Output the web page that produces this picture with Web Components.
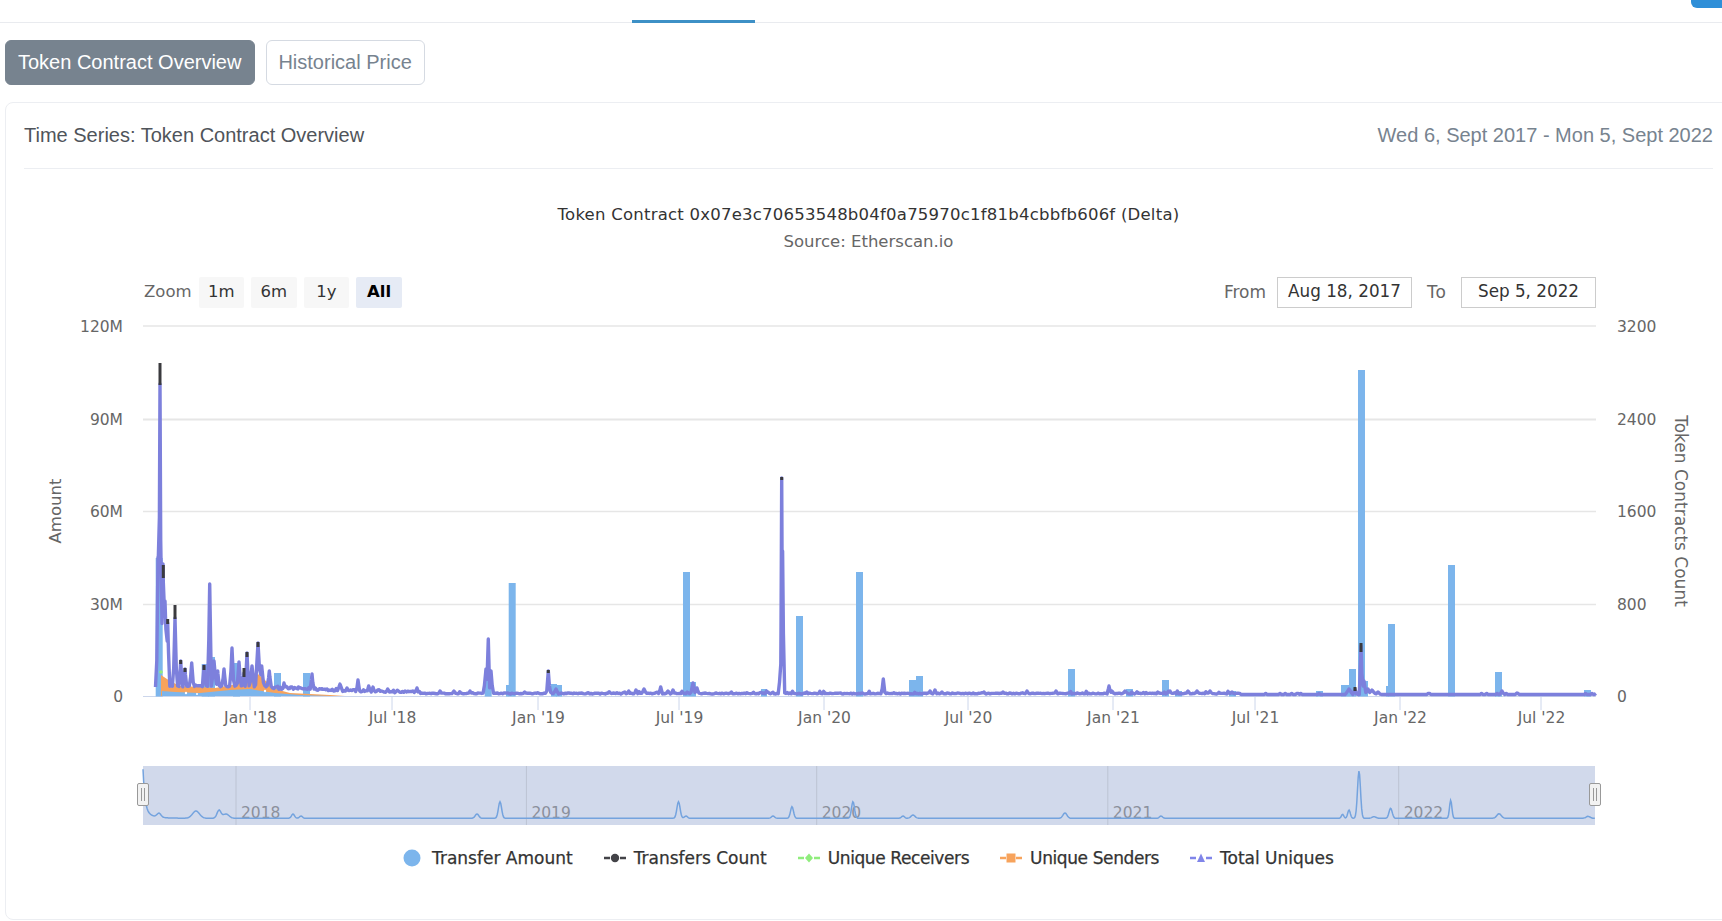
<!DOCTYPE html>
<html>
<head>
<meta charset="utf-8">
<title>Token Contract Overview</title>
<style>
html, body { margin: 0; padding: 0; background: #fff; overflow: hidden; }
body { width: 1722px; height: 921px; font-family: "Liberation Sans", Arial, sans-serif; }
</style>
</head>
<body>
<nav-bar></nav-bar>
<tab-row>
  <tab-pill active>Token Contract Overview</tab-pill>
  <tab-pill>Historical Price</tab-pill>
</tab-row>
<chart-card>
  <span slot="title">Time Series: Token Contract Overview</span>
  <span slot="range">Wed 6, Sept 2017 - Mon 5, Sept 2022</span>
  <stock-chart></stock-chart>
</chart-card>

<script>
const CHART_FONT = '"DejaVu Sans", Verdana, sans-serif';

class NavBar extends HTMLElement {
    constructor() {
        super();
        this.shadow = this.attachShadow({mode:'open'});
        this.shadow.innerHTML = `<style>
            :host { display: flex; height: 22px; border-bottom: 1px solid #e9ebef; justify-content: space-between; }
            .tab { width: 123px; margin-left: 632px; height: 20px; border-bottom: 3px solid #3d90c6; }
            .btn { width: 31px; height: 8px; background: #2f8fd8; border-bottom-left-radius: 6px; }
        </style><div class="tab"></div><div class="btn"></div>`;
    }
}

class TabRow extends HTMLElement {
    constructor() {
        super();
        this.shadow = this.attachShadow({mode:'open'});
        this.shadow.innerHTML = `<style>
            :host { display: flex; gap: 11px; padding: 17px 0 17px 5px; }
        </style><slot></slot>`;
    }
}

class TabPill extends HTMLElement {
    constructor() {
        super();
        this.shadow = this.attachShadow({mode:'open'});
        this.shadow.innerHTML = `<style>
            :host { display: flex; align-items: center; box-sizing: border-box; height: 45px; padding: 0 12px 0 11px;
                border: 1px solid #d5dae2; border-radius: 6px; color: #77838f; background: #fff;
                font: 20px "Liberation Sans", Arial, sans-serif; white-space: nowrap; }
            :host([active]) { background: #77838f; border-color: #77838f; color: #fff; padding: 0 13px 0 12px; }
        </style><slot></slot>`;
    }
}

class ChartCard extends HTMLElement {
    constructor() {
        super();
        this.shadow = this.attachShadow({mode:'open'});
        this.shadow.innerHTML = `<style>
            :host { display: block; box-sizing: border-box; width: 1727px; height: 818px; margin-left: 5px; padding: 0 18px;
                border: 1px solid #eceef2; border-radius: 8px; font: 20px "Liberation Sans", Arial, sans-serif; }
            header { display: flex; justify-content: space-between; align-items: center; height: 65px; border-bottom: 1px solid #eceef2; }
            .t { color: #4f545a; }
            .r { color: #77838f; }
        </style>
        <header><div class="t"><slot name="title"></slot></div><div class="r"><slot name="range"></slot></div></header>
        <slot></slot>`;
    }
}

class RangeSelector extends HTMLElement {
    constructor() {
        super();
        this.shadow = this.attachShadow({mode:'open'});
        this.shadow.innerHTML = `<style>
            :host { display: flex; justify-content: space-between; align-items: center; height: 31px; padding: 0 117px 0 120px;
                font: 16.5px ${CHART_FONT}; color: #666; }
            .side { display: flex; align-items: center; }
            .side > span { margin-bottom: 2px; }
            .zoom { width: 54.5px; }
            button { all: unset; box-sizing: border-box; width: 45.6px; height: 31px; padding-bottom: 3px; margin-right: 7px; text-align: center; background: #f7f7f7;
                border-radius: 2px; color: #333; font-family: ${CHART_FONT}; font-size: 16.5px; }
            button.on { background: #e6ebf5; color: #000; font-weight: bold; }
            .date { box-sizing: border-box; width: 135px; height: 31px; line-height: 26px; text-align: center; border: 1px solid #ccc; color: #333; font-size: 16.8px; }
            .from { margin-right: 11px; font-size: 17px; }
            .to { width: 22px; margin-left: 15px; margin-right: 12px; font-size: 17px; letter-spacing: 1px; }
        </style>
        <div class="side">
            <span class="zoom">Zoom</span>
            <button>1m</button><button>6m</button><button>1y</button><button class="on">All</button>
        </div>
        <div class="side">
            <span class="from">From</span><div class="date">Aug 18, 2017</div>
            <span class="to">To</span><div class="date">Sep 5, 2022</div>
        </div>`;
    }
}

class PricePlot extends HTMLElement {
    constructor() {
        super();
        this.shadow = this.attachShadow({mode:'open'});
        this.shadow.innerHTML = `<style>
            :host { display: block; height: 430px; }
            svg { display: block; }
            text { font: 15.5px ${CHART_FONT}; fill: #666; }
        </style>` + this.render();
    }

    render() {
        // everything in here is in page coordinates, the viewBox takes care of the offset
        const left = 143, right = 1596, base = 695.5;
        let rng = 12345;
        const rand = () => {
            rng = (rng * 1664525 + 1013904223) % 4294967296;
            return rng / 4294967296;
        };

        let out = `<svg width="1689" height="430" viewBox="24 315 1689 430" xmlns="http://www.w3.org/2000/svg">`;

        [325, 418.5, 510.5, 603.5].forEach(y => {
            out += `<line x1="${left}" x2="${right}" y1="${y}" y2="${y}" stroke="#e6e6e6" stroke-width="${y == 418.5 ? 2 : 1.5}"/>`;
        });

        // axis labels
        [["120M", 325], ["90M", 418.5], ["60M", 510.5], ["30M", 603.5], ["0", 695]].forEach(l => {
            out += `<text x="123" y="${l[1] + 5.5}" text-anchor="end">${l[0]}</text>`;
        });
        [["3200", 325], ["2400", 418.5], ["1600", 510.5], ["800", 603.5], ["0", 695]].forEach(l => {
            out += `<text x="1617" y="${l[1] + 5.5}">${l[0]}</text>`;
        });
        out += `<text transform="translate(61 510) rotate(-90)" text-anchor="middle" style="font-size:16.5px">Amount</text>`;
        out += `<text transform="translate(1675 510) rotate(90)" text-anchor="middle" style="font-size:17px">Token Contracts Count</text>`;

        // time axis
        out += `<line x1="${left}" x2="${right}" y1="${base}" y2="${base}" stroke="#ccd6eb"/>`;
        [["Jan '18", 250], ["Jul '18", 392], ["Jan '19", 538], ["Jul '19", 679], ["Jan '20", 824],
         ["Jul '20", 968], ["Jan '21", 1113], ["Jul '21", 1255], ["Jan '22", 1400], ["Jul '22", 1541]].forEach(t => {
            out += `<line x1="${t[1]}" x2="${t[1]}" y1="${base}" y2="709" stroke="#ccd6eb"/>`;
            out += `<text x="${t[1] + 0.5}" y="722" text-anchor="middle">${t[0]}</text>`;
        });

        // transfer amount columns: [x, top, width]
        const bars = [[155.7,557,7],[201.7,663,7],[208,656,7],[233,662,7],[274,672,7],[303,672,7],[484.7,669,7],[508.7,582,7],[506,684,3],
            [551,683,6],[556,684,6],[683,571,7],[690,681,6],[761,688,6],[796,615,7],[856,571,7],[909,679,7],[916,675,7],
            [1068,668,7],[1126,688,7],[1162,679,7],[1175,690,7],[1229,690,7],[1316,690,7],[1341,684,8],[1349,668,7],[1358,369,7],[1365,680,3],
            [1386,685,3],[1388,623,7],[1448,564,7],[1495,671,7],[1584,689,7]];
        bars.forEach(b => {
            out += `<rect x="${b[0]}" y="${b[1]}" width="${b[2]}" height="${base - b[1]}" fill="#7cb5ec"/>`;
        });

        // low stacked areas in the first months
        out += `<path d="M161 695L161 674 170 680 180 685 200 686 215 687 232 684 245 680 258 673 266 680 275 688 290 692 330 694 345 695Z" fill="#f7a35c"/>`;
        out += `<path d="M162 695L162 690 175 691 200 692 230 689 250 688 262 690 275 692 300 694 330 695Z" fill="#7cb5ec"/>`;
        out += `<circle cx="246" cy="681" r="1.6" fill="#90ed7d"/><circle cx="161" cy="671" r="1.8" fill="#90ed7d"/>`;
        out += `<circle cx="186" cy="692" r="1.2" fill="#fff"/><circle cx="197" cy="693" r="1" fill="#fff"/><circle cx="265" cy="690" r="1.2" fill="#fff"/>`;

        // spikes of the line series: [x, top, half width]
        const spikes = [[158,556,1.6],[160,383,1.4],[163,563,2.2],[165,600,3],[167.7,622,2],[175,617,2],[180.7,660,2],[185,668,2],[191.7,662,2.5],
            [204,665,2],[209.7,583,1.8],[214,660,3],[217.7,670,2],[224,668,2.5],[232,647,2.2],[239,661,2.5],[244,672,2],[247,652,2],[252,665,3],[258,642,3],
            [261.7,665,3],[269.3,670,2.5],[284,682,2.5],[298,688,3],[312,673,2],[322,689,4],[340,683,4],[347,687,3],[358,679,2],[368.7,685,2.5],[373,686,2.5],[387.7,688,3],[417,687,2],[440,690,2],
            [488.3,638,1.4],[486,668,2.5],[491,670,2],[454,690,3],[470,690,2],[548.3,670,1.8],[556,688,3],[636,689,2],[644,688,3],[660.7,686,2],[668,690,3],[673,689,2],
            [693,682,2.5],[697,687,2],[781.7,477,1],[782.6,550,1.4],[781,660,2.4],[883.3,678,1.8],
            [768,691,3],[930,690,2],[935,689,2],[942,691,2],[984,691,2],[1003,691,3],[1027,690,2],[1056,690,2],[1109,685,2],[1112,690,3],[1125,690,3],
            [1170,690,2],[1188,690,3],[1197,690,3],[1210,690,3],[1232,691,3],[1349,688,4],[1355,688,2],[1361,645,1.6],[1364,680,2.2],[1368,688,3],[1372,689,4],[1378,691,3],[1502,690,2.5],[1517,692,2]];

        // sample every 1.3px and on each spike top, otherwise narrow peaks get lost
        const xs = spikes.map(s => s[0]);
        for (let x = 155.5; x <= right; x += 1.3) xs.push(x);
        xs.sort((a, b) => a - b);

        const pts = xs.map(x => {
            let y;
            if (x < 270) y = 686 - 2 * rand();
            else if (x < 420) y = 688 + (x - 270) / 150 * 5 - 3 * rand();
            else if (x < 1240) y = 693 - (rand() > 0.85 ? rand() * 3 : rand());
            else y = 693.8 - (rand() > 0.93 ? 1.4 : 0.3);
            spikes.forEach(s => {
                const d = Math.abs(x - s[0]);
                if (d < s[2]) y = Math.min(y, s[1] + (694 - s[1]) * d / s[2]);
            });
            return x.toFixed(1) + " " + y.toFixed(1);
        });
        out += `<path d="M${pts.join("L")}" fill="none" stroke="#7d80dc" stroke-width="3.4" stroke-linejoin="round"/>`;

        // transfers count peeks out above the uniques line at the tall spikes
        [[160,362,384],[163.3,564,577],[167.7,618,623],[175,604,618],[180.7,659,663],[185,667,671],[204,664,669],[244,667,676],[247,651,656],
         [258,641,646],[548.3,669,672],[781.7,476,479],[1361,642,651],[1355,686,690]].forEach(t => {
            out += `<line x1="${t[0]}" x2="${t[0]}" y1="${t[1]}" y2="${t[2]}" stroke="#3a3a3e" stroke-width="3"/>`;
        });

        return out + `</svg>`;
    }
}

class RangeNavigator extends HTMLElement {
    constructor() {
        super();
        this.shadow = this.attachShadow({mode:'open'});
        this.shadow.innerHTML = `<style>
            :host { display: block; height: 60px; margin-top: 20px; }
            svg { display: block; }
            text { font: 15.5px ${CHART_FONT}; fill: #8b909c; }
        </style>` + this.render();
    }

    handle(x) {
        return `<rect x="${x}" y="782.5" width="11" height="22" rx="1.5" fill="#f2f2f2" stroke="#999"/>
            <path d="M${x + 4} 787V800M${x + 7} 787V800" stroke="#999"/>`;
    }

    render() {
        const left = 143, right = 1595;
        // [x, top, sigma]
        const peaks = [[159,813.3,2],[196,810,3.5],[219,809.3,2],[226,813,3],[293,813,1.5],[301,815,1.5],[477,813,1.8],[500,800.7,1.6],[678.5,800.7,1.6],[686,815,1.5],
            [773,815,1.5],[792,805.7,1.5],[853,800.7,1.5],[903,815,1.5],[913,814,2],[1065,812,2],[1161,815,1.5],[1342.6,813.3,1.2],[1349,809,1.3],[1359,770,1.5],
            [1374,815.7,2],[1390.6,807.3,1.6],[1450.7,799.3,1.2],[1499,812.7,2.2],[1588,815.3,2]];
        const pts = [];
        for (let x = left; x <= right; x += 0.7) {
            let y = 817.3 - 42 * Math.exp(-(x - left) / 2) - 7 * Math.exp(-(x - left) / 9);
            peaks.forEach(p => {
                y -= (817.3 - p[1]) * Math.exp(-Math.pow(x - p[0], 2) / (2 * p[2] * p[2]));
            });
            pts.push(x.toFixed(1) + " " + y.toFixed(1));
        }

        let out = `<svg width="1689" height="60" viewBox="24 765 1689 60" xmlns="http://www.w3.org/2000/svg">`;
        out += `<rect x="${left}" y="765" width="${right - left}" height="59" fill="#d1d9eb"/>`;
        [[236,"2018"],[526.4,"2019"],[816.7,"2020"],[1107.8,"2021"],[1398.7,"2022"]].forEach(t => {
            out += `<line x1="${t[0]}" x2="${t[0]}" y1="765" y2="824" stroke="#bcc3d3"/>`;
            out += `<text x="${t[0] + 5}" y="816.5">${t[1]}</text>`;
        });
        out += `<path d="M${pts.join("L")}" fill="none" stroke="#74a3de" stroke-width="1.5"/>`;
        return out + this.handle(137.5) + this.handle(1589.5) + `</svg>`;
    }
}

class LegendItem extends HTMLElement {
    constructor() {
        super();
        this.shadow = this.attachShadow({mode:'open'});
        this.shadow.innerHTML = `<style>
            :host { display: flex; align-items: center; gap: 8px; font: 17px ${CHART_FONT}; color: #333; white-space: nowrap; -webkit-text-stroke: 0.25px #333; }
            :host([shape=big]) { gap: 11px; }
            svg { display: block; }
        </style><svg width="22" height="18" viewBox="0 0 22 18"></svg><slot></slot>`;
    }

    connectedCallback() {
        const shape = this.getAttribute("shape");
        const color = this.getAttribute("color");
        const svg = this.shadow.querySelector("svg");
        let m = "";
        if (shape == "big") {
            svg.setAttribute("width", "18");
            svg.setAttribute("viewBox", "0 0 18 18");
            m = `<circle cx="9" cy="9" r="8.5" fill="${color}"/>`;
        } else {
            m = `<path d="M0 9H22" stroke="${color}" stroke-width="2.4" stroke-dasharray="6 10 6"/>`;
            if (shape == "circle") m += `<circle cx="11" cy="9" r="4.2" fill="${color}"/>`;
            if (shape == "diamond") m += `<path d="M11 4.5L15 9 11 13.5 7 9Z" fill="${color}"/>`;
            if (shape == "square") m += `<rect x="6.5" y="4.5" width="9" height="9" fill="${color}"/>`;
            if (shape == "triangle") m += `<path d="M11 4.5L15 13H7Z" fill="${color}"/>`;
        }
        svg.innerHTML = m;
    }
}

class ChartLegend extends HTMLElement {
    constructor() {
        super();
        this.shadow = this.attachShadow({mode:'open'});
        this.shadow.innerHTML = `<style>
            :host { display: flex; justify-content: center; gap: 31px; margin-top: 22px; height: 20px; }
        </style><slot></slot>`;
    }
}

class StockChart extends HTMLElement {
    constructor() {
        super();
        this.shadow = this.attachShadow({mode:'open'});
        this.shadow.innerHTML = `<style>
            :host { display: block; font-family: ${CHART_FONT}; }
            .title { margin-top: 35px; height: 22px; line-height: 22px; text-align: center; font-size: 16.5px; letter-spacing: 0.23px; color: #333; }
            .sub { margin-top: 5px; height: 22px; line-height: 22px; text-align: center; font-size: 16.5px; color: #666; }
            range-selector { margin-top: 24px; margin-bottom: 8px; }
            .tight { letter-spacing: -0.4px; }
        </style>
        <div class="title">Token Contract 0x07e3c70653548b04f0a75970c1f81b4cbbfb606f (Delta)</div>
        <div class="sub">Source: Etherscan.io</div>
        <range-selector></range-selector>
        <price-plot></price-plot>
        <range-navigator></range-navigator>
        <chart-legend>
            <legend-item shape="big" color="#7cb5ec">Transfer Amount</legend-item>
            <legend-item shape="circle" color="#434348">Transfers Count</legend-item>
            <legend-item class="tight" shape="diamond" color="#90ed7d">Unique Receivers</legend-item>
            <legend-item class="tight" shape="square" color="#f7a35c">Unique Senders</legend-item>
            <legend-item shape="triangle" color="#8085e9">Total Uniques</legend-item>
        </chart-legend>`;
    }
}

customElements.define("range-selector", RangeSelector);
customElements.define("price-plot", PricePlot);
customElements.define("range-navigator", RangeNavigator);
customElements.define("legend-item", LegendItem);
customElements.define("chart-legend", ChartLegend);
customElements.define("stock-chart", StockChart);
customElements.define("nav-bar", NavBar);
customElements.define("tab-row", TabRow);
customElements.define("tab-pill", TabPill);
customElements.define("chart-card", ChartCard);
</script>
</body>
</html>
